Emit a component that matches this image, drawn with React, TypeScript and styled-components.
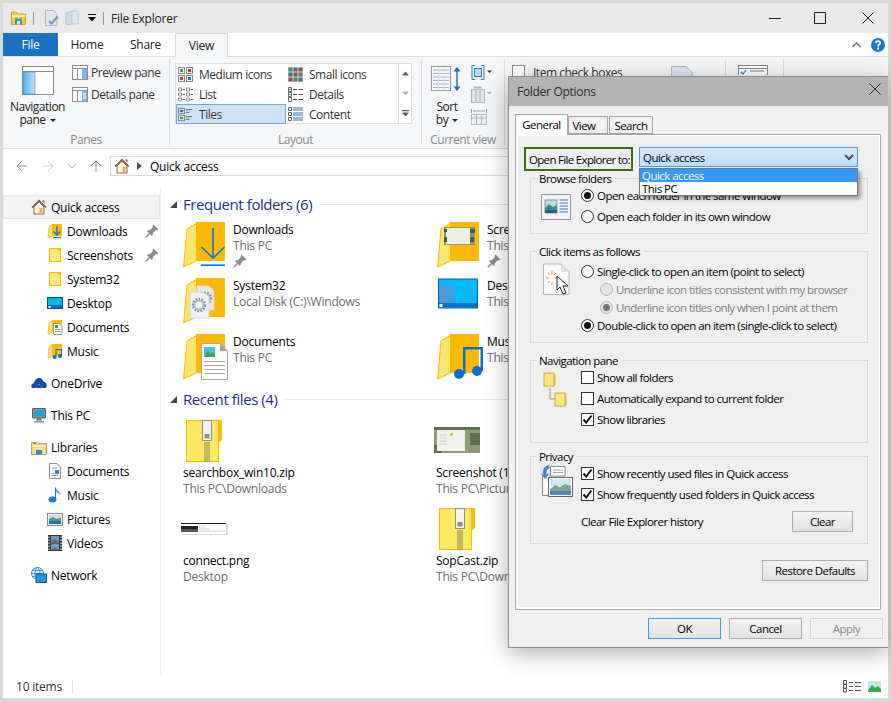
import type { ReactNode } from "react";
import styled, { createGlobalStyle } from "styled-components";

const FONT = `"Open Sans", "Noto Sans", sans-serif`;

const GlobalStyle = createGlobalStyle`
  html, body {
    margin: 0;
    padding: 0;
    background: #d9d9d9;
  }
  * {
    box-sizing: border-box;
  }
  svg {
    display: block;
    flex-shrink: 0;
  }
`;

const Frame = styled.div`
  position: relative;
  width: 891px;
  height: 701px;
  padding: 3px;
  overflow: hidden;
  background: #d9d9d9;
  font-family: ${FONT};
  font-size: 12px;
  letter-spacing: -0.22px;
  color: #000;
`;
const Explorer = styled.div`
  display: flex;
  flex-direction: column;
  height: 100%;
  background: #fff;
`;

/* title bar */
const TitleBar = styled.div`
  display: flex;
  align-items: center;
  height: 30px;
  padding-left: 8px;
  background: #e9e9e9;
`;
const TitleSep = styled.div`
  width: 1px;
  height: 13px;
  margin: 0 7px;
  background: #9a9a9a;
`;
const TitleText = styled.div`
  color: #222;
`;
const QatGap = styled.div<{ $w: number }>`
  width: ${(p) => p.$w}px;
`;
const WinControls = styled.div`
  display: flex;
  align-items: center;
  margin-left: auto;
  padding-right: 14px;
  gap: 33px;
  svg:last-child {
    margin-left: 3px;
  }
`;

/* tabs */
const TabRow = styled.div`
  display: flex;
  align-items: stretch;
  height: 24px;
  border-bottom: 1px solid #dadbdc;
`;
const RibbonTab = styled.div<{ $w: number; $kind?: "file" | "active" }>`
  display: flex;
  align-items: center;
  justify-content: center;
  width: ${(p) => p.$w}px;
  height: ${(p) => (p.$kind === "active" ? 24 : 23)}px;
  color: ${(p) => (p.$kind === "file" ? "#fff" : "#222")};
  background: ${(p) =>
    p.$kind === "file" ? "#1a72c4" : p.$kind === "active" ? "#f5f6f7" : "transparent"};
  border: ${(p) => (p.$kind === "active" ? "1px solid #dadbdc" : "none")};
  border-bottom: none;
`;
const TabEnd = styled.div`
  display: flex;
  align-items: center;
  gap: 10px;
  margin-left: auto;
  padding-right: 3px;
`;

/* ribbon */
const Ribbon = styled.div`
  display: flex;
  height: 92px;
  background: #f5f6f7;
  border-bottom: 1px solid #dadbdc;
  letter-spacing: -0.48px;
`;
const Group = styled.div<{ $w: number }>`
  display: flex;
  flex-direction: column;
  width: ${(p) => p.$w}px;
  flex-shrink: 0;
  height: 86px;
  margin-top: 2px;
  border-right: 1px solid #dadbdc;
`;
const GroupBody = styled.div`
  display: flex;
  flex: 1;
  min-height: 0;
`;
const GroupLabel = styled.div`
  height: 18px;
  line-height: 25px;
  text-align: center;
  color: #8a8a8a;
`;
const BigButton = styled.div<{ $w: number; $pad?: number }>`
  display: flex;
  flex-direction: column;
  align-items: center;
  width: ${(p) => p.$w}px;
  padding-top: 7px;
  padding-left: ${(p) => p.$pad ?? 0}px;
  line-height: 13px;
  color: #222;
`;
const BigLabel = styled.div<{ $top?: number }>`
  margin-top: ${(p) => p.$top ?? 5}px;
  text-align: center;
`;
const Caret = styled.span`
  display: inline-block;
  width: 0;
  height: 0;
  margin-left: 4px;
  vertical-align: 2px;
  border: 3px solid transparent;
  border-top: 3px solid #222;
  border-bottom: none;
`;
const PaneList = styled.div`
  display: flex;
  flex-direction: column;
  gap: 5px;
  padding-top: 5px;
`;
const PaneItem = styled.div`
  display: flex;
  align-items: center;
  gap: 3px;
  height: 17px;
  color: #333;
`;
const Gallery = styled.div`
  display: flex;
  width: 237px;
  height: 61px;
  margin: 4px 0 0 5px;
  background: #fff;
  border: 1px solid #dadbdc;
`;
const GalleryGrid = styled.div`
  display: grid;
  grid-template-columns: 110px 112px;
  grid-auto-rows: 20px;
  width: 222px;
`;
const GalleryItem = styled.div<{ $selected?: boolean }>`
  display: flex;
  align-items: center;
  gap: 6px;
  padding-left: 2px;
  color: #333;
  background: ${(p) => (p.$selected ? "#cce4f7" : "transparent")};
  outline: ${(p) => (p.$selected ? "1px solid #70a9dc" : "none")};
  outline-offset: -1px;
`;
const GalleryScroll = styled.div`
  flex: 1;
  display: flex;
  flex-direction: column;
  align-items: center;
  justify-content: space-around;
  border-left: 1px solid #dadbdc;
`;
const SmallStack = styled.div`
  display: flex;
  flex-direction: column;
  gap: 6px;
  padding-top: 6px;
`;
const ShowRow = styled.div`
  display: flex;
  align-items: flex-start;
  gap: 8px;
  padding: 5px 32px 0 7px;
  color: #333;
  svg {
    margin: 2px 0 0 auto;
  }
`;
const CheckBoxGhost = styled.span`
  width: 13px;
  height: 13px;
  margin-top: 1px;
  background: #fff;
  border: 1px solid #8a8a8a;
`;
const ShowIcon = styled.div<{ $left: number }>`
  margin: 6px 0 0 ${(p) => p.$left}px;
`;

/* address row */
const AddressRow = styled.div`
  display: flex;
  align-items: center;
  height: 38px;
  padding: 0 0 4px 13px;
`;
const NavArrows = styled.div`
  display: flex;
  align-items: center;
  gap: 14px;
  width: 94px;
`;
const AddressBox = styled.div`
  display: flex;
  align-items: center;
  gap: 7px;
  width: 660px;
  height: 20px;
  padding-left: 3px;
  border: 1px solid #d9d9d9;
`;
const AddressText = styled.span`
  margin-left: 1px;
`;

/* main area */
const Main = styled.div`
  display: flex;
  flex: 1;
  min-height: 0;
`;
const NavPane = styled.div`
  width: 158px;
  padding-top: 8px;
  border-right: 1px solid #eee;
`;
const NavItem = styled.div<{ $sub?: boolean; $active?: boolean; $gap?: boolean }>`
  display: flex;
  align-items: center;
  height: 24px;
  margin-top: ${(p) => (p.$gap ? 8 : 0)}px;
  padding-left: ${(p) => (p.$sub ? 44 : 28)}px;
  background: ${(p) => (p.$active ? "#f2f2f2" : "transparent")};
  outline: ${(p) => (p.$active ? "1px solid #e6e6e6" : "none")};
  outline-offset: -1px;
`;
const NavIcon = styled.div`
  display: flex;
  justify-content: center;
  width: 16px;
  margin-right: 4px;
`;
const NavPin = styled.div`
  margin-left: auto;
  padding-right: 1px;
`;
const Content = styled.div`
  flex: 1;
  padding: 8px 0 0 9px;
`;
const SectionHead = styled.div<{ $top?: number }>`
  display: flex;
  align-items: center;
  height: 18px;
  margin-top: ${(p) => p.$top ?? 0}px;
`;
const SectionTitle = styled.div`
  margin-left: 6px;
  font-size: 15px;
  letter-spacing: -0.42px;
  color: #1e3287;
`;
const SectionLine = styled.div`
  flex: 1;
  height: 1px;
  margin-left: 7px;
  background: #e5e5e5;
`;
const FolderGrid = styled.div`
  display: grid;
  grid-template-columns: 254px 254px;
  grid-auto-rows: 56px;
  margin: 8px 0 0 13px;
`;
const FolderTile = styled.div`
  display: flex;
  gap: 6px;
`;
const FolderIcon = styled.div`
  width: 44px;
  margin-top: 1px;
`;
const FolderText = styled.div`
  padding-top: 1px;
`;
const TileLine = styled.div<{ $muted?: boolean }>`
  height: 16px;
  line-height: 16px;
  white-space: nowrap;
  color: ${(p) => (p.$muted ? "#6d6d6d" : "#000")};
`;
const FileGrid = styled.div`
  display: grid;
  grid-template-columns: 253px 253px;
  grid-auto-rows: 88px;
  margin: 8px 0 0 13px;
`;
const FileIcon = styled.div`
  display: flex;
  align-items: center;
  justify-content: center;
  width: 42px;
  height: 49px;
`;
const StatusBar = styled.div`
  display: flex;
  align-items: center;
  height: 23px;
  padding: 0 7px 0 13px;
  color: #333;
`;
const StatusSep = styled.div`
  width: 1px;
  height: 14px;
  margin-left: 10px;
  background: #e5e5e5;
`;
const StatusIcons = styled.div`
  display: flex;
  align-items: center;
  gap: 7px;
  margin-left: auto;
`;

/* folder options dialog */
const Dialog = styled.div`
  position: absolute;
  left: 508px;
  top: 76px;
  display: flex;
  flex-direction: column;
  width: 380px;
  height: 572px;
  background: #f0f0f0;
  border-left: 1px solid #8f8f8f;
  border-bottom: 1px solid #8f8f8f;
  box-shadow: 0 5px 22px rgba(0, 0, 0, 0.32);
  font-size: 11.5px;
  letter-spacing: -0.55px;
`;
const DialogTitle = styled.div`
  display: flex;
  align-items: center;
  justify-content: space-between;
  height: 30px;
  padding: 0 7px 0 8px;
  background: #b4b4b4;
  border-top: 1px solid #8c8c8c;
  color: #2a2a2a;
  font-size: 12px;
  letter-spacing: -0.3px;
  svg {
    margin-bottom: 6px;
  }
`;
const DialogBody = styled.div`
  padding: 8px 5px 0 6px;
`;
const TabList = styled.div`
  display: flex;
  align-items: flex-end;
  height: 20px;
`;
const DialogTab = styled.div<{ $w: number; $active?: boolean; $shift?: number }>`
  position: relative;
  display: flex;
  align-items: center;
  justify-content: center;
  width: ${(p) => p.$w}px;
  height: ${(p) => (p.$active ? 21 : 18)}px;
  margin-bottom: ${(p) => (p.$active ? -1 : 0)}px;
  margin-right: ${(p) => (p.$active ? 0 : 1)}px;
  padding-right: ${(p) => p.$shift ?? 0}px;
  padding-bottom: ${(p) => (p.$active ? 2 : 0)}px;
  background: ${(p) => (p.$active ? "#fff" : "#f0f0f0")};
  border: 1px solid #a6a6a6;
  border-bottom: ${(p) => (p.$active ? "none" : "1px solid #a6a6a6")};
`;
const Panel = styled.div`
  width: 366px;
  height: 476px;
  padding: 12px 12px 0 14px;
  background: #efefef;
  border: 1px solid #a6a6a6;
  box-shadow: inset 2px 0 0 #fff, inset 0 -2px 0 #fff, inset 0 1px 0 #fff,
    inset -1px 0 0 #fff;
`;
const OpenRow = styled.div`
  position: relative;
  z-index: 2;
  display: flex;
  height: 24px;
`;
const OpenLabel = styled.div`
  display: flex;
  align-items: center;
  width: 109px;
  height: 24px;
  margin-left: -6px;
  padding-left: 3px;
  white-space: nowrap;
  letter-spacing: -0.68px;
  border: 2px solid #3f6b16;
`;
const SelectWrap = styled.div`
  position: relative;
  width: 219px;
  height: 20px;
  margin-left: 6px;
`;
const SelectBox = styled.div`
  display: flex;
  align-items: center;
  justify-content: space-between;
  height: 20px;
  padding: 0 3px;
  background: linear-gradient(#d8eafc, #bddcf8);
  border: 1px solid #4a9ae8;
`;
const DropList = styled.div`
  position: absolute;
  left: 0;
  top: 21px;
  width: 100%;
  background: #fff;
  border: 1px solid #767676;
  box-shadow: 3px 3px 4px rgba(0, 0, 0, 0.35);
`;
const DropItem = styled.div<{ $selected?: boolean }>`
  height: 13px;
  line-height: 13px;
  padding-left: 2px;
  color: ${(p) => (p.$selected ? "#f4f9ff" : "#000")};
  background: ${(p) => (p.$selected ? "#3399ff" : "#fff")};
`;
const Fieldset = styled.fieldset<{ $h: number; $top: number }>`
  display: block;
  min-width: 0;
  height: ${(p) => p.$h}px;
  margin: ${(p) => p.$top}px 0 0;
  padding: 0;
  border: 1px solid #d9d9d9;
`;
const Legend = styled.legend`
  height: 14px;
  margin-left: 6px;
  padding: 0 3px 0 2px;
  line-height: 16px;
`;
const FieldBody = styled.div<{ $top?: number }>`
  display: flex;
  padding-top: ${(p) => p.$top ?? 0}px;
`;
const FieldIcon = styled.div<{ $left: number; $top: number }>`
  width: 50px;
  padding: ${(p) => p.$top}px 0 0 ${(p) => p.$left}px;
`;
const Options = styled.div`
  flex: 1;
  min-width: 0;
`;
const Option = styled.div<{ $h: number; $indent?: boolean; $off?: boolean }>`
  display: flex;
  align-items: center;
  gap: 3px;
  height: ${(p) => p.$h}px;
  margin-left: ${(p) => (p.$indent ? 19 : 0)}px;
  white-space: nowrap;
  color: ${(p) => (p.$off ? "#808080" : "#000")};
`;
const Radio = styled.span<{ $checked?: boolean; $off?: boolean }>`
  display: flex;
  align-items: center;
  justify-content: center;
  width: 13px;
  height: 13px;
  flex-shrink: 0;
  background: ${(p) => (p.$off ? "#e6e6e6" : "#fff")};
  border: 1px solid ${(p) => (p.$off ? "#b0b0b0" : "#333")};
  border-radius: 50%;
  &::after {
    content: "";
    display: ${(p) => (p.$checked ? "block" : "none")};
    width: 7px;
    height: 7px;
    border-radius: 50%;
    background: ${(p) => (p.$off ? "#777" : "#111")};
  }
`;
const Check = styled.span`
  display: flex;
  align-items: center;
  justify-content: center;
  width: 13px;
  height: 13px;
  flex-shrink: 0;
  background: #fff;
  border: 1px solid #333;
`;
const ClearRow = styled.div`
  display: flex;
  align-items: center;
  justify-content: space-between;
  height: 21px;
  margin-top: 6px;
  padding-right: 14px;
`;
const Button = styled.div<{ $w: number; $kind?: "default" | "off" }>`
  display: flex;
  align-items: center;
  justify-content: center;
  width: ${(p) => p.$w}px;
  height: 21px;
  background: ${(p) => (p.$kind === "off" ? "#f0f0f0" : "linear-gradient(#f2f2f2, #e3e3e3)")};
  border: 1px solid
    ${(p) => (p.$kind === "default" ? "#3d9cf0" : p.$kind === "off" ? "#d4d4d4" : "#adadad")};
  color: ${(p) => (p.$kind === "off" ? "#8a8a8a" : "#000")};
`;
const RestoreRow = styled.div`
  display: flex;
  justify-content: flex-end;
  margin-top: 16px;
`;
const DialogFooter = styled.div`
  display: flex;
  justify-content: flex-end;
  gap: 8px;
  padding-top: 8px;
`;

/* ---- drawings ---- */

const PinIcon = ({ size = 14 }: { size?: number }) => (
  <svg width={size} height={size} viewBox="0 0 14 14">
    <path d="M8.5 0.5 13.5 5.5 12 6.5 10.8 6.2 7.8 9.2 7.8 11 6.8 12 2 7.2 3 6.2 4.8 6.2 7.8 3.2 7.5 2Z" fill="#8c8c8c" />
    <path d="M4.5 9.5 0.8 13.2" stroke="#8c8c8c" strokeWidth="1.4" />
  </svg>
);

const BigFolder = ({ children }: { children?: ReactNode }) => (
  <svg width="48" height="46" viewBox="0 0 48 46">
    <rect x="13" y="0" width="29" height="39" fill="#ffb900" />
    <path d="M0.6 45 4 7 13.5 1.2V39Z" fill="#fbe56e" stroke="#ffb900" />
    {children}
  </svg>
);

const DownArrow = () => (
  <g stroke="#0078d7" fill="none">
    <path d="M30 6V36M18.5 25 30 36 41.5 25" strokeWidth="1.6" />
    <path d="M18 43.2H42" strokeWidth="1.6" />
  </g>
);
const Gear = ({ x, y, r }: { x: number; y: number; r: number }) => (
  <g>
    <circle cx={x} cy={y} r={r} fill="none" stroke="#7f97ab" strokeWidth="2.4" strokeDasharray="1.8 1.2" />
    <circle cx={x} cy={y} r={r - 1.6} fill="none" stroke="#a7b8c6" strokeWidth="1.6" />
  </g>
);
const SystemDocs = () => (
  <g>
    <path d="M14 8H26L31 13V32H14Z" fill="#e8e8e8" stroke="#d6d6d6" />
    <Gear x={23} y={20} r={5} />
    <path d="M7 14H20L26 19V40H7Z" fill="#f2f2f2" stroke="#d6d6d6" />
    <Gear x={16} y={27} r={6} />
  </g>
);
const DocPicture = () => (
  <g>
    <path d="M18.5 9.5H37L44.5 17V45.5H18.5Z" fill="#fff" stroke="#a5a5a5" />
    <path d="M37 9.5V17H44.5Z" fill="#a5a5a5" />
    <rect x="21" y="13" width="11" height="10" fill="#3ec1f0" />
    <path d="M21 23 25 17 28 20 30 18 32 20V23Z" fill="#3aa655" />
    <path d="M21 27.5H42M21 31.5H42M21 35.5H42M21 39.5H42" stroke="#a5a5a5" />
  </g>
);
const MusicNotes = () => (
  <g fill="#0a6ed1">
    <path d="M26 13H46V37H43.5V15.5H28.5V40H26Z" />
    <circle cx="22" cy="40" r="5" />
    <circle cx="40" cy="37" r="5" />
  </g>
);
const ThumbOverlay = () => (
  <g>
    <rect x="7" y="5" width="31" height="18" fill="#8a9a6d" />
    <rect x="9" y="6" width="24" height="16" fill="#eef0e4" />
    <path d="M33 7h5v4h-5zM33 15h4v5h-4zM7 7h3v3H7zM7 15h3v5H7z" fill="#4d5a3c" />
  </g>
);
const DesktopBig = () => (
  <svg width="42" height="32" viewBox="0 0 42 32">
    <rect x="1.5" y="1" width="39" height="29" fill="#00b9f5" stroke="#0063b1" />
    <rect x="2" y="7" width="15" height="18" fill="#4a9ade" />
    <rect x="2" y="25" width="38" height="4.5" fill="#0a72cc" />
    <rect x="2.5" y="26" width="3" height="3" fill="#fff" />
  </svg>
);
const ZipIcon = () => (
  <svg width="36" height="42" viewBox="0 0 36 42">
    <rect x="29" y="0" width="7" height="20" fill="#ffb900" />
    <path d="M29 20 32.5 23 36 20Z" fill="#ffb900" />
    <rect x="0.5" y="0.5" width="32" height="41" fill="#fde95f" stroke="#ffb900" />
    <rect x="16.5" y="0.5" width="9" height="20" fill="#f2f2f2" stroke="#8e8e8e" />
    <rect x="18.5" y="14" width="5" height="4.5" fill="#8e8e8e" />
    <path d="M18 23H24M18 25H24M18 27H24M18 29H24M18 31H24M18 33H24M18 35H24M18 37H24M18 39H24M18 41H24" stroke="#8a8a6a" />
  </svg>
);
const ThumbConnect = () => (
  <svg width="47" height="12" viewBox="0 0 47 12">
    <rect x="1" y="1" width="46" height="11" fill="#d8d8d8" />
    <rect x="0" y="0" width="45" height="11" fill="#fff" />
    <rect x="0" y="0" width="45" height="1" fill="#222" />
    <rect x="0" y="3" width="17" height="6" fill="#222" />
    <rect x="0" y="6" width="17" height="3" fill="#555" />
    <path d="M18 4H24M18 6H28M18 8H44" stroke="#e6c8c8" />
  </svg>
);
const ThumbScreenshot = () => (
  <svg width="46" height="27" viewBox="0 0 46 27">
    <rect width="46" height="26" fill="#8f9c78" />
    <path d="M0 0h46v3H0zM36 6h10v12H36zM0 18h8v8H0z" fill="#5f7050" />
    <rect x="3" y="3" width="28" height="21" fill="#f0f0ea" />
    <rect x="16" y="6" width="3" height="3" fill="#e8b34a" />
    <path d="M6 8H13M6 11H13M6 14H13M6 17H13" stroke="#c4c8c0" />
  </svg>
);

const SmallFolderBase = ({ children }: { children?: ReactNode }) => (
  <svg width="16" height="16" viewBox="0 0 16 16">
    <rect x="5" y="1" width="10" height="12" fill="#ffb900" />
    <path d="M1 15 2 4 5.5 1.5V13Z" fill="#fbe56e" stroke="#ffb900" strokeWidth="0.8" />
    {children}
  </svg>
);
const SmallDownload = () => (
  <SmallFolderBase>
    <path d="M10 3V12M6.5 8.5 10 12 13.5 8.5" stroke="#0078d7" strokeWidth="1.3" fill="none" />
    <path d="M6 14.5H14" stroke="#0078d7" strokeWidth="1.2" />
  </SmallFolderBase>
);
const SmallPlain = () => (
  <svg width="16" height="16" viewBox="0 0 16 16">
    <rect x="2.5" y="1.5" width="11" height="13" fill="#fde97c" stroke="#ffb900" />
    <rect x="11" y="2" width="2" height="2" fill="#ffb900" />
  </svg>
);
const SmallDesktop = () => (
  <svg width="16" height="14" viewBox="0 0 16 14">
    <rect x="0.5" y="1.5" width="15" height="11" fill="#00b4f0" stroke="#00508f" />
    <rect x="1" y="9" width="14" height="3" fill="#0a72cc" />
    <rect x="1.5" y="10" width="2" height="2" fill="#fff" />
  </svg>
);
const SmallDocs = () => (
  <SmallFolderBase>
    <path d="M6.5 4.5H12L15 7.5V15.5H6.5Z" fill="#fff" stroke="#999" />
    <rect x="8" y="6" width="3" height="3" fill="#3aa655" />
    <path d="M8 10.5H13.5M8 12.5H13.5" stroke="#999" />
  </SmallFolderBase>
);
const SmallMusic = () => (
  <SmallFolderBase>
    <path d="M8.5 6H15V13H14V7H9.5V14.5H8.5Z" fill="#0a6ed1" />
    <circle cx="7.5" cy="14" r="2" fill="#0a6ed1" />
    <circle cx="13" cy="13" r="2" fill="#0a6ed1" />
  </SmallFolderBase>
);
const Cloud = () => (
  <svg width="16" height="12" viewBox="0 0 16 12">
    <path d="M1 11C-0.5 9 0.3 6.5 3 6.2 3.5 3 6 0.8 8.5 1 10.5 1.2 11.8 2.5 12.2 4.5 14.5 4.6 16 7 15.6 9.5L15 11H11L8.5 7 6 9 4 11Z" fill="#0f4fa8" />
    <path d="M4 11 6.5 8.2 9 7.5 11 11Z" fill="#0f4fa8" />
  </svg>
);
const ThisPC = () => (
  <svg width="16" height="16" viewBox="0 0 16 16">
    <rect x="1.5" y="1.5" width="13" height="9.5" rx="0.5" fill="#9a9a9a" stroke="#555" />
    <rect x="3" y="3" width="10" height="6.5" fill="#19a5e0" />
    <path d="M6 11H10L11 13.5H5Z" fill="#777" />
    <path d="M3 14H13V15.5H3Z" fill="#8c8c8c" />
  </svg>
);
const LibFolder = () => (
  <svg width="16" height="15" viewBox="0 0 16 15">
    <path d="M0.5 2.5H6L7 3.5H15.5V14.5H0.5Z" fill="#f3d77e" stroke="#b9a35e" />
    <rect x="1.5" y="5" width="13" height="2" fill="#fff3c4" />
    <path d="M2 14 3 8H13L14 14Z" fill="#f7e08e" />
    <rect x="5" y="10" width="6" height="4.5" fill="#3a86c8" />
    <rect x="2" y="3" width="3" height="1" fill="#5ab44a" />
  </svg>
);
const LibDoc = () => (
  <svg width="14" height="16" viewBox="0 0 14 16">
    <path d="M1.5 0.5H9L12.5 4V15.5H1.5Z" fill="#fff" stroke="#8a8a8a" />
    <path d="M3.5 5H9M3.5 12.5H10.5M3.5 10.5H6" stroke="#8aa0b8" />
    <rect x="7" y="7" width="4" height="4" fill="#2f7ed0" />
  </svg>
);
const LibMusic = () => (
  <svg width="14" height="16" viewBox="0 0 14 16">
    <path d="M8 0.5V12.5H7V0.5Z" fill="#1f78d0" />
    <path d="M8 1C9 4 13 4.5 12.5 9 12 6.5 10 6 8 5Z" fill="#5aa3e6" />
    <ellipse cx="4.5" cy="12.5" rx="4" ry="3" fill="#1f78d0" />
  </svg>
);
const LibPictures = () => (
  <svg width="16" height="13" viewBox="0 0 16 13">
    <rect x="0.5" y="0.5" width="15" height="12" fill="#f2f2f2" stroke="#8a8a8a" />
    <rect x="2" y="2" width="12" height="4" fill="#bfe0f0" />
    <path d="M2 6 6 4 10 6 14 4.5V8H2Z" fill="#5b9a80" />
    <rect x="2" y="8" width="12" height="3" fill="#1f6fbf" />
  </svg>
);
const LibVideos = () => (
  <svg width="14" height="16" viewBox="0 0 14 16">
    <rect width="14" height="16" fill="#2b3a3a" />
    <path d="M3 1H11V7.5H3ZM3 8.5H11V15H3Z" fill="#5aa0d8" />
    <path d="M3 7 7 4 11 7.5H3ZM3 15 7 12 11 15Z" fill="#9a5a3a" />
    <path d="M1 1.5V3M1 4.5V6M1 7.5V9M1 10.5V12M1 13.5V15M13 1.5V3M13 4.5V6M13 7.5V9M13 10.5V12M13 13.5V15" stroke="#fff" />
  </svg>
);
const NetworkIcon = () => (
  <svg width="16" height="16" viewBox="0 0 16 16">
    <circle cx="6.5" cy="6.5" r="6" fill="#e8f4fc" stroke="#1f86d8" />
    <path d="M0.5 6.5H12.5M6.5 0.5C3 4 3 9 6.5 12.5M6.5 0.5C10 4 10 9 6.5 12.5M1.5 3.5H11.5M1.5 9.5H11.5" stroke="#1f86d8" fill="none" strokeWidth="0.8" />
    <rect x="5" y="7" width="10.5" height="8.5" fill="#1a9be8" stroke="#0d5ea6" />
  </svg>
);
const HomeIcon = ({ size = 16 }: { size?: number }) => (
  <svg width={size} height={size} viewBox="0 0 16 16">
    <path d="M3 8V15H13V8L8 3Z" fill="#fff3dc" stroke="#7a6a50" />
    <rect x="8.5" y="9" width="3" height="6" fill="#f0a848" />
    <path d="M1 8.5 8 1.5 15 8.5" fill="none" stroke="#6b5f55" strokeWidth="1.3" />
    <path d="M11.5 1.5H13.5V4.5L11.5 2.8Z" fill="#d13c2f" />
  </svg>
);

const Triangle = () => (
  <svg width="7" height="7" viewBox="0 0 7 7">
    <path d="M7 0V7H0Z" fill="#444" />
  </svg>
);

const AppFolderIcon = () => (
  <svg width="15" height="14" viewBox="0 0 15 14">
    <path d="M0.5 2V13.5H14.5V3H6.5L5 1H1Z" fill="#fbc93c" stroke="#e0a020" />
    <rect x="1" y="4" width="13" height="2" fill="#fff0b0" />
    <rect x="4" y="7.5" width="7" height="6" fill="#1f9be0" />
    <rect x="6" y="10" width="3" height="3.5" fill="#ffe27a" />
  </svg>
);
const QuickDoc = () => (
  <svg width="15" height="16" viewBox="0 0 15 16">
    <path d="M1.5 0.5H9.5L13 4V15.5H1.5Z" fill="#dfe7f2" stroke="#a9b7cc" />
    <path d="M5 11 7.5 13.5 13.5 6.5" stroke="#7d95b5" strokeWidth="2" fill="none" />
  </svg>
);
const QuickBook = () => (
  <svg width="15" height="16" viewBox="0 0 15 16">
    <path d="M1 3 7 1V14L1 15Z" fill="#cfdbea" stroke="#b3c2d6" />
    <path d="M7 1H13V14H7Z" fill="#e0e8f2" stroke="#c3cfdf" />
  </svg>
);
const QatCaret = () => (
  <svg width="8" height="8" viewBox="0 0 8 8">
    <path d="M0 0H8V1H0ZM0 3H8L4 7.5Z" fill="#111" />
  </svg>
);
const WinMin = () => (
  <svg width="12" height="12" viewBox="0 0 12 12">
    <path d="M0 6.5H12" stroke="#222" />
  </svg>
);
const WinMax = () => (
  <svg width="12" height="12" viewBox="0 0 12 12">
    <rect x="0.5" y="0.5" width="11" height="11" fill="none" stroke="#222" />
  </svg>
);
const WinClose = ({ size = 12 }: { size?: number }) => (
  <svg width={size} height={size} viewBox="0 0 12 12">
    <path d="M0.5 0.5 11.5 11.5M11.5 0.5 0.5 11.5" stroke="#222" fill="none" />
  </svg>
);
const ChevronUp = () => (
  <svg width="9" height="6" viewBox="0 0 9 6">
    <path d="M0.5 5 4.5 1 8.5 5" stroke="#777" strokeWidth="1.6" fill="none" />
  </svg>
);
const HelpIcon = () => (
  <svg width="14" height="14" viewBox="0 0 14 14">
    <circle cx="7" cy="7" r="7" fill="#1a78d2" />
    <path d="M4.8 5.2C4.8 2.5 9.2 2.5 9.2 5 9.2 6.5 7 6.6 7 8.4" stroke="#fff" strokeWidth="1.7" fill="none" />
    <rect x="6.1" y="9.6" width="1.9" height="1.9" fill="#fff" />
  </svg>
);

const NavPaneIcon = () => (
  <svg width="32" height="29" viewBox="0 0 32 29">
    <rect x="0.5" y="0.5" width="31" height="28" fill="#fff" stroke="#8d8d8d" />
    <path d="M1 5.5H31" stroke="#8d8d8d" />
    <defs>
      <linearGradient id="navfill" x1="0" y1="0" x2="1" y2="0">
        <stop offset="0" stopColor="#5aaef0" />
        <stop offset="1" stopColor="#bfe0fa" />
      </linearGradient>
    </defs>
    <rect x="1" y="6" width="12" height="22" fill="url(#navfill)" stroke="#2f8fe0" strokeWidth="0.6" />
  </svg>
);
const PaneIcon = ({ details }: { details?: boolean }) => (
  <svg width="16" height="15" viewBox="0 0 16 15">
    <rect x="0.5" y="0.5" width="15" height="14" fill="#fff" stroke="#8d8d8d" />
    <path d="M1 3.5H15M5.5 4V14" stroke="#8d8d8d" />
    <rect x="10" y="4" width="5" height="10" fill="#79b8ee" />
    {details && <path d="M11 7H14M11 9H14M11 11H14" stroke="#fff" />}
  </svg>
);

const cell = (x: number, y: number, s: string, k: number) => (
  <rect key={k} x={x} y={y} width="3" height="3" fill={s} />
);
const GlyphMedium = () => (
  <svg width="15" height="15" viewBox="0 0 15 15">
    <rect x="0.5" y="0.5" width="6" height="6" fill="#fff" stroke="#888" />
    <rect x="8.5" y="0.5" width="6" height="6" fill="#fff" stroke="#888" />
    <rect x="0.5" y="8.5" width="6" height="6" fill="#fff" stroke="#888" />
    <rect x="8.5" y="8.5" width="6" height="6" fill="#fff" stroke="#888" />
    <rect x="2" y="2" width="3" height="3" fill="#2f9e58" />
    <rect x="10" y="2" width="3" height="3" fill="#c0392b" />
    <rect x="2" y="10" width="3" height="3" fill="#c0392b" />
    <rect x="10" y="10" width="3" height="3" fill="#2b6fb5" />
  </svg>
);
const GlyphSmall = () => {
  const colors = ["#2f9e58", "#2b6fb5", "#c0392b"];
  return (
    <svg width="15" height="15" viewBox="0 0 15 15">
      <rect width="15" height="15" fill="#fff" />
      {[0, 1, 2].flatMap((r) =>
        [0, 1, 2].map((c) => cell(c * 5 + 1, r * 5 + 1, colors[(r + c) % 3], r * 3 + c)),
      )}
      <path d="M0.5 .5h4v4h-4zM5.5 .5h4v4h-4zM10.5 .5h4v4h-4zM0.5 5.5h4v4h-4zM5.5 5.5h4v4h-4zM10.5 5.5h4v4h-4zM0.5 10.5h4v4h-4zM5.5 10.5h4v4h-4zM10.5 10.5h4v4h-4z" fill="none" stroke="#888" strokeWidth="0.8" />
    </svg>
  );
};
const GlyphList = () => (
  <svg width="15" height="15" viewBox="0 0 15 15">
    <path d="M.5 1h3v3h-3zM.5 6h3v3h-3zM.5 11h3v3h-3zM8.5 1h3v3h-3zM8.5 6h3v3h-3zM8.5 11h3v3h-3z" fill="#fff" stroke="#777" strokeWidth="0.8" />
    <path d="M4.5 2.5H7M4.5 7.5H7M4.5 12.5H7M12.5 2.5H15M12.5 7.5H15M12.5 12.5H15" stroke="#555" />
  </svg>
);
const GlyphDetails = () => (
  <svg width="15" height="15" viewBox="0 0 15 15">
    <path d="M.5 .5h3v4h-3zM.5 5.5h3v4h-3zM.5 10.5h3v4h-3z" fill="#fff" stroke="#555" strokeWidth="0.9" />
    <path d="M5 2.5H9M10.5 2.5H15M5 7.5H9M10.5 7.5H15M5 12.5H9M10.5 12.5H15" stroke="#555" />
    <rect x="1.3" y="1.8" width="1.4" height="1.4" fill="#c0392b" />
    <rect x="1.3" y="6.8" width="1.4" height="1.4" fill="#2f9e58" />
  </svg>
);
const GlyphTiles = () => (
  <svg width="15" height="15" viewBox="0 0 17 17">
    <rect x="0.5" y="1.5" width="7" height="6" fill="#fff" stroke="#777" />
    <rect x="0.5" y="9.5" width="7" height="6" fill="#fff" stroke="#777" />
    <rect x="2" y="3" width="4" height="3" fill="#2f6fb5" />
    <rect x="2" y="11" width="4" height="3" fill="#3aa655" />
    <path d="M9 3H16M9 6H13M9 11H16M9 14H13" stroke="#555" />
  </svg>
);
const GlyphContent = () => (
  <svg width="15" height="15" viewBox="0 0 15 15">
    <path d="M.5 .5h3v3h-3zM.5 5.5h3v3h-3zM.5 10.5h3v3h-3z" fill="#fff" stroke="#555" strokeWidth="0.9" />
    <path d="M5 1H15M5 3H15M5 6H15M5 8H15M5 11H15M5 13H15" stroke="#2f6fb5" />
  </svg>
);
const ScrollGlyph = ({ kind }: { kind: "up" | "down" | "more" }) => (
  <svg width="7" height="7" viewBox="0 0 7 7">
    {kind === "up" && <path d="M3.5 1.5 7 5.5H0Z" fill="#52637a" />}
    {kind === "down" && <path d="M3.5 5.5 7 1.5H0Z" fill="#a9b2bd" />}
    {kind === "more" && <path d="M0 0H7V1.2H0ZM0 2.5H7L3.5 6.5Z" fill="#52637a" />}
  </svg>
);
const SortIcon = () => (
  <svg width="32" height="26" viewBox="0 0 32 26">
    <rect x="0.5" y="0.5" width="19" height="24" fill="#f5f7fa" stroke="#9a9a9a" />
    <path d="M2 4H18M2 7.5H18M2 11H18M2 14.5H18M2 18H18M2 21.5H18" stroke="#a8b6c8" />
    <path d="M7.5 1V24M13 1V24" stroke="#d8dee6" />
    <path d="M26 2V24" stroke="#1a6fb8" strokeWidth="1.4" />
    <path d="M22.5 5.5 26 1 29.5 5.5ZM22.5 20.5 26 25 29.5 20.5Z" fill="#1a6fb8" />
  </svg>
);
const GroupByIcon = () => (
  <svg width="22" height="15" viewBox="0 0 22 15">
    <path d="M4 .5H1V14.5H4M10 .5H13V14.5H10" fill="none" stroke="#2b7cc7" />
    <rect x="3.5" y="3.5" width="7" height="8" fill="#bcdcf5" stroke="#2b7cc7" />
    <path d="M16 5.5H21L18.5 8Z" fill="#333" />
  </svg>
);
const AddColsIcon = () => (
  <svg width="22" height="17" viewBox="0 0 22 17">
    <rect x="0.5" y="3.5" width="13" height="13" fill="#dfe6ee" stroke="#b0b8c2" />
    <path d="M5 4V16M9 4V16" stroke="#a4adb8" />
    <rect x="3" y="0.5" width="8" height="2" fill="#b0b8c2" />
    <path d="M16 6H21L18.5 8.5Z" fill="#b0b0b0" />
  </svg>
);
const FitColsIcon = () => (
  <svg width="16" height="16" viewBox="0 0 16 16">
    <rect x="0.5" y="5.5" width="15" height="10" fill="#edf1f5" stroke="#b0b8c2" />
    <path d="M5.5 6V15M10.5 6V15M1 9H15" stroke="#b0b8c2" />
    <path d="M.5 0V4M15.5 0V4M2 2H14" stroke="#8fa0b2" />
  </svg>
);
const NavArrow = ({ dir, muted }: { dir: "left" | "right" | "up"; muted?: boolean }) => {
  const color = muted ? "#cfcfcf" : "#8a8a8a";
  const d =
    dir === "left"
      ? "M11 6H1M6 1 1 6 6 11"
      : dir === "right"
        ? "M1 6H11M6 1 11 6 6 11"
        : "M6 12V1M1 6 6 1 11 6";
  return (
    <svg width="12" height="12" viewBox="0 0 12 12">
      <path d={d} stroke={color} fill="none" />
    </svg>
  );
};
const TinyChevron = () => (
  <svg width="8" height="5" viewBox="0 0 8 5">
    <path d="M.5 .5 4 4 7.5 .5" stroke="#a0a0a0" fill="none" />
  </svg>
);
const AddrCaret = () => (
  <svg width="5" height="8" viewBox="0 0 5 8">
    <path d="M0 0 5 4 0 8Z" fill="#555" />
  </svg>
);
const SelectChevron = () => (
  <svg width="10" height="7" viewBox="0 0 10 7">
    <path d="M1 1 5 5 9 1" stroke="#44505c" strokeWidth="2" fill="none" />
  </svg>
);
const CheckMark = () => (
  <svg width="11" height="11" viewBox="0 0 11 11">
    <path d="M1.5 5.5 4.2 8.5 9.5 1.5" stroke="#111" strokeWidth="2" fill="none" />
  </svg>
);
const ItemPageIcon = () => (
  <svg width="22" height="16" viewBox="0 0 22 16">
    <path d="M.5 .5H15L21 6V16H.5Z" fill="#dfe7f2" stroke="#a9b7cc" />
  </svg>
);
const OptionsGhost = () => (
  <svg width="30" height="10" viewBox="0 0 30 10">
    <rect x="0.5" y="0.5" width="29" height="12" fill="#fff" stroke="#888" />
    <path d="M1 3.5H29" stroke="#888" />
    <path d="M3 7 5 9 8 5" stroke="#2b7cc7" fill="none" strokeWidth="1.2" />
    <path d="M12 6H26" stroke="#aaa" strokeWidth="1.6" />
  </svg>
);
const BrowseIcon = () => (
  <svg width="30" height="26" viewBox="0 0 30 26">
    <rect x="0.5" y="0.5" width="29" height="25" fill="#f3f3f3" stroke="#8d98a8" />
    <rect x="4" y="6" width="12" height="13" fill="#b9dbea" stroke="#666" strokeWidth="0.6" />
    <path d="M4 14 8 10 12 13 16 11V16H4Z" fill="#3f8c70" />
    <rect x="4" y="16" width="12" height="3" fill="#1f5fa8" />
    <path d="M18.5 6H27M18.5 9H27M18.5 12H27M18.5 15H27M18.5 18H27" stroke="#3c72c8" />
  </svg>
);
const ClickIcon = () => (
  <svg width="28" height="33" viewBox="0 0 28 33">
    <path d="M0.5 1H18L26 9V31.5H0.5Z" fill="#fafafa" stroke="#b5b5b5" />
    <path d="M18 1V9H26Z" fill="#e0e0e0" />
    <path d="M9 8V12M9 19V22M3 15H6M11 15H14M5 10 7 12M13 10 11 12M5 20 7 18" stroke="#f08a4b" />
    <path d="M14 13V27L17 24 20 31 23 30 20 23H25Z" fill="#f8f8f8" stroke="#222" />
  </svg>
);
const NavTreeIcon = () => (
  <svg width="26" height="35" viewBox="0 0 26 35">
    <path d="M7 16V27H13" stroke="#9a9a9a" fill="none" />
    <rect x="1" y="1" width="10" height="13" fill="#fbe58a" stroke="#d6a72b" />
    <rect x="11" y="2" width="1.5" height="11" fill="#eab53a" />
    <rect x="12" y="21" width="10" height="13" fill="#fbe58a" stroke="#d6a72b" />
    <rect x="22" y="22" width="1.5" height="11" fill="#eab53a" />
  </svg>
);
const PrivacyIcon = () => (
  <svg width="33" height="33" viewBox="0 0 33 33">
    <path d="M10.5 2.5H25V12H10.5ZM2.5 12V31.5H16" fill="#fff" stroke="#8a8a8a" strokeWidth="1" />
    <path d="M13 6H23M13 8.5H23" stroke="#9aa6b4" />
    <path d="M9 1C4 2 2 6 3 11L0 9 5 15 10 9 6.5 10.5C6 7 7 5 9.5 4Z" fill="#4a86c5" />
    <rect x="8.5" y="13.5" width="24" height="19" fill="#fff" stroke="#666" />
    <rect x="10" y="15" width="21" height="7" fill="#cfe4f5" />
    <path d="M10 25 15 21 20 23 25 20 31 22V27H10Z" fill="#7ea88e" />
    <rect x="10" y="27" width="21" height="4" fill="#4d86c4" />
  </svg>
);
const ViewDetailsIcon = () => (
  <svg width="18" height="13" viewBox="0 0 18 13">
    <path d="M.5 .5h3v3.6h-3zM.5 4.5h3v3.6h-3zM.5 8.5h3v3.6h-3z" fill="#fff" stroke="#444" strokeWidth="0.9" />
    <path d="M6 2.5H10M12 2.5H18M6 6.5H10M12 6.5H18M6 10.5H10M12 10.5H18" stroke="#555" />
  </svg>
);
const ViewTilesIcon = () => (
  <svg width="13" height="11" viewBox="0 0 13 11">
    <rect width="13" height="11" fill="#bfe6f5" />
    <path d="M0 9 4 4 7 7 10 5 13 8V11H0Z" fill="#35a84f" />
    <circle cx="9" cy="2.5" r="1.5" fill="#f4e04d" />
  </svg>
);

type FolderEntry = { name: string; sub: string; pinned?: boolean; icon: ReactNode };
const FOLDERS: FolderEntry[] = [
  { name: "Downloads", sub: "This PC", pinned: true, icon: <BigFolder><DownArrow /></BigFolder> },
  { name: "Screenshots", sub: "This PC\\Pictures", pinned: true, icon: <BigFolder><ThumbOverlay /></BigFolder> },
  { name: "System32", sub: "Local Disk (C:)\\Windows", icon: <BigFolder><SystemDocs /></BigFolder> },
  { name: "Desktop", sub: "This PC", icon: <DesktopBig /> },
  { name: "Documents", sub: "This PC", icon: <BigFolder><DocPicture /></BigFolder> },
  { name: "Music", sub: "This PC", icon: <BigFolder><MusicNotes /></BigFolder> },
];
const FILES = [
  { name: "searchbox_win10.zip", sub: "This PC\\Downloads", icon: <ZipIcon /> },
  { name: "Screenshot (1).png", sub: "This PC\\Pictures", icon: <ThumbScreenshot /> },
  { name: "connect.png", sub: "Desktop", icon: <ThumbConnect /> },
  { name: "SopCast.zip", sub: "This PC\\Downloads", icon: <ZipIcon /> },
];
const NAV = [
  { label: "Quick access", icon: <HomeIcon />, active: true },
  { label: "Downloads", icon: <SmallDownload />, sub: true, pinned: true },
  { label: "Screenshots", icon: <SmallPlain />, sub: true, pinned: true },
  { label: "System32", icon: <SmallPlain />, sub: true },
  { label: "Desktop", icon: <SmallDesktop />, sub: true },
  { label: "Documents", icon: <SmallDocs />, sub: true },
  { label: "Music", icon: <SmallMusic />, sub: true },
  { label: "OneDrive", icon: <Cloud />, gap: true },
  { label: "This PC", icon: <ThisPC />, gap: true },
  { label: "Libraries", icon: <LibFolder />, gap: true },
  { label: "Documents", icon: <LibDoc />, sub: true },
  { label: "Music", icon: <LibMusic />, sub: true },
  { label: "Pictures", icon: <LibPictures />, sub: true },
  { label: "Videos", icon: <LibVideos />, sub: true },
  { label: "Network", icon: <NetworkIcon />, gap: true },
];
const LAYOUTS = [
  { label: "Medium icons", icon: <GlyphMedium /> },
  { label: "Small icons", icon: <GlyphSmall /> },
  { label: "List", icon: <GlyphList /> },
  { label: "Details", icon: <GlyphDetails /> },
  { label: "Tiles", icon: <GlyphTiles />, selected: true },
  { label: "Content", icon: <GlyphContent /> },
];

export default function App() {
  return (
    <Frame>
      <GlobalStyle />
      <Explorer>
        <TitleBar>
          <AppFolderIcon />
          <TitleSep />
          <QatGap $w={3} />
          <QuickDoc />
          <QatGap $w={6} />
          <QuickBook />
          <QatGap $w={8} />
          <QatCaret />
          <TitleSep />
          <TitleText>File Explorer</TitleText>
          <WinControls>
            <WinMin />
            <WinMax />
            <WinClose />
          </WinControls>
        </TitleBar>
        <TabRow>
          <RibbonTab $w={55} $kind="file">File</RibbonTab>
          <RibbonTab $w={58}>Home</RibbonTab>
          <RibbonTab $w={59}>Share</RibbonTab>
          <RibbonTab $w={53} $kind="active">View</RibbonTab>
          <TabEnd>
            <ChevronUp />
            <HelpIcon />
          </TabEnd>
        </TabRow>
        <Ribbon>
          <Group $w={167}>
            <GroupBody>
              <BigButton $w={69}>
                <NavPaneIcon />
                <BigLabel>
                  Navigation
                  <br />
                  pane
                  <Caret />
                </BigLabel>
              </BigButton>
              <PaneList>
                <PaneItem>
                  <PaneIcon />
                  Preview pane
                </PaneItem>
                <PaneItem>
                  <PaneIcon details />
                  Details pane
                </PaneItem>
              </PaneList>
            </GroupBody>
            <GroupLabel>Panes</GroupLabel>
          </Group>
          <Group $w={252}>
            <GroupBody>
              <Gallery>
                <GalleryGrid>
                  {LAYOUTS.map((l) => (
                    <GalleryItem key={l.label} $selected={l.selected}>
                      {l.icon}
                      {l.label}
                    </GalleryItem>
                  ))}
                </GalleryGrid>
                <GalleryScroll>
                  <ScrollGlyph kind="up" />
                  <ScrollGlyph kind="down" />
                  <ScrollGlyph kind="more" />
                </GalleryScroll>
              </Gallery>
            </GroupBody>
            <GroupLabel>Layout</GroupLabel>
          </Group>
          <Group $w={83}>
            <GroupBody>
              <BigButton $w={49} $pad={1}>
                <SortIcon />
                <BigLabel $top={8}>
                  Sort
                  <br />
                  by
                  <Caret />
                </BigLabel>
              </BigButton>
              <SmallStack>
                <GroupByIcon />
                <AddColsIcon />
                <FitColsIcon />
              </SmallStack>
            </GroupBody>
            <GroupLabel>Current view</GroupLabel>
          </Group>
          <Group $w={221}>
            <ShowRow>
              <CheckBoxGhost />
              Item check boxes
              <ItemPageIcon />
            </ShowRow>
          </Group>
          <Group $w={58}>
            <ShowIcon $left={12}>
              <OptionsGhost />
            </ShowIcon>
          </Group>
        </Ribbon>
        <AddressRow>
          <NavArrows>
            <NavArrow dir="left" />
            <NavArrow dir="right" muted />
            <TinyChevron />
            <NavArrow dir="up" />
          </NavArrows>
          <AddressBox>
            <HomeIcon />
            <AddrCaret />
            <AddressText>Quick access</AddressText>
          </AddressBox>
        </AddressRow>
        <Main>
          <NavPane>
            {NAV.map((n, i) => (
              <NavItem key={i} $sub={n.sub} $active={n.active} $gap={n.gap}>
                <NavIcon>{n.icon}</NavIcon>
                {n.label}
                {n.pinned && (
                  <NavPin>
                    <PinIcon />
                  </NavPin>
                )}
              </NavItem>
            ))}
          </NavPane>
          <Content>
            <SectionHead>
              <Triangle />
              <SectionTitle>Frequent folders (6)</SectionTitle>
              <SectionLine />
            </SectionHead>
            <FolderGrid>
              {FOLDERS.map((f) => (
                <FolderTile key={f.name}>
                  <FolderIcon>{f.icon}</FolderIcon>
                  <FolderText>
                    <TileLine>{f.name}</TileLine>
                    <TileLine $muted>{f.sub}</TileLine>
                    {f.pinned && <PinIcon />}
                  </FolderText>
                </FolderTile>
              ))}
            </FolderGrid>
            <SectionHead $top={1}>
              <Triangle />
              <SectionTitle>Recent files (4)</SectionTitle>
              <SectionLine />
            </SectionHead>
            <FileGrid>
              {FILES.map((f) => (
                <div key={f.name}>
                  <FileIcon>{f.icon}</FileIcon>
                  <TileLine>{f.name}</TileLine>
                  <TileLine $muted>{f.sub}</TileLine>
                </div>
              ))}
            </FileGrid>
          </Content>
        </Main>
        <StatusBar>
          10 items
          <StatusSep />
          <StatusIcons>
            <ViewDetailsIcon />
            <ViewTilesIcon />
          </StatusIcons>
        </StatusBar>
      </Explorer>

      <Dialog>
        <DialogTitle>
          Folder Options
          <WinClose />
        </DialogTitle>
        <DialogBody>
          <TabList>
            <DialogTab $w={53} $active>General</DialogTab>
            <DialogTab $w={40} $shift={8}>View</DialogTab>
            <DialogTab $w={44}>Search</DialogTab>
          </TabList>
          <Panel>
            <OpenRow>
              <OpenLabel>Open File Explorer to:</OpenLabel>
              <SelectWrap>
                <SelectBox>
                  Quick access
                  <SelectChevron />
                </SelectBox>
                <DropList>
                  <DropItem $selected>Quick access</DropItem>
                  <DropItem>This PC</DropItem>
                </DropList>
              </SelectWrap>
            </OpenRow>

            <Fieldset $h={63} $top={0}>
              <Legend>Browse folders</Legend>
              <FieldBody>
                <FieldIcon $left={10} $top={9}>
                  <BrowseIcon />
                </FieldIcon>
                <Options>
                  <Option $h={21}>
                    <Radio $checked />
                    Open each folder in the same window
                  </Option>
                  <Option $h={21}>
                    <Radio />
                    Open each folder in its own window
                  </Option>
                </Options>
              </FieldBody>
            </Fieldset>

            <Fieldset $h={99} $top={10}>
              <Legend>Click items as follows</Legend>
              <FieldBody $top={4}>
                <FieldIcon $left={12} $top={1}>
                  <ClickIcon />
                </FieldIcon>
                <Options>
                  <Option $h={18}>
                    <Radio />
                    Single-click to open an item (point to select)
                  </Option>
                  <Option $h={18} $indent $off>
                    <Radio $off />
                    Underline icon titles consistent with my browser
                  </Option>
                  <Option $h={18} $indent $off>
                    <Radio $off $checked />
                    Underline icon titles only when I point at them
                  </Option>
                  <Option $h={18}>
                    <Radio $checked />
                    Double-click to open an item (single-click to select)
                  </Option>
                </Options>
              </FieldBody>
            </Fieldset>

            <Fieldset $h={90} $top={10}>
              <Legend>Navigation pane</Legend>
              <FieldBody>
                <FieldIcon $left={12} $top={5}>
                  <NavTreeIcon />
                </FieldIcon>
                <Options>
                  <Option $h={21}>
                    <Check />
                    Show all folders
                  </Option>
                  <Option $h={21}>
                    <Check />
                    Automatically expand to current folder
                  </Option>
                  <Option $h={21}>
                    <Check>
                      <CheckMark />
                    </Check>
                    Show libraries
                  </Option>
                </Options>
              </FieldBody>
            </Fieldset>

            <Fieldset $h={95} $top={6}>
              <Legend>Privacy</Legend>
              <FieldBody>
                <FieldIcon $left={9} $top={1}>
                  <PrivacyIcon />
                </FieldIcon>
                <Options>
                  <Option $h={21}>
                    <Check>
                      <CheckMark />
                    </Check>
                    Show recently used files in Quick access
                  </Option>
                  <Option $h={21}>
                    <Check>
                      <CheckMark />
                    </Check>
                    Show frequently used folders in Quick access
                  </Option>
                  <ClearRow>
                    Clear File Explorer history
                    <Button $w={61}>Clear</Button>
                  </ClearRow>
                </Options>
              </FieldBody>
            </Fieldset>

            <RestoreRow>
              <Button $w={106}>Restore Defaults</Button>
            </RestoreRow>
          </Panel>
          <DialogFooter>
            <Button $w={73} $kind="default">OK</Button>
            <Button $w={73}>Cancel</Button>
            <Button $w={73} $kind="off">Apply</Button>
          </DialogFooter>
        </DialogBody>
      </Dialog>
    </Frame>
  );
}
